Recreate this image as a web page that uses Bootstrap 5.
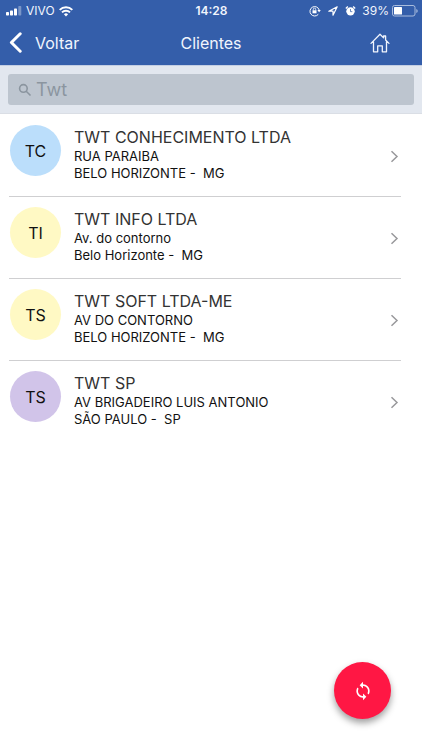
<!DOCTYPE html>
<html lang="pt-BR">
<head>
<meta charset="utf-8">
<meta name="viewport" content="width=device-width, initial-scale=1">
<title>Clientes</title>
<link href="https://cdn.jsdelivr.net/npm/bootstrap@5.3.0/dist/css/bootstrap.min.css" rel="stylesheet">
<style>
body { font-family: Inter, "Liberation Sans", sans-serif; background: #fff; color: #111; }
svg { display: block; flex: none; }
.app-head { background: #345eaa; color: #f1f5fd; }
.three-col { display: grid; grid-template-columns: 1fr auto 1fr; align-items: center; }
.status-line { height: 22px; padding: 0 4px 0 5px; font-size: 12px; line-height: 22px; }
.title-line { height: 43px; padding: 0 9px 2px; font-size: 16px; }
.title-line h1 { font-size: 16px; line-height: 24px; font-weight: 400; }
.title-line a { color: inherit; }
.back { gap: 13px; }
.home { margin-right: 23px; }
.status-icons { gap: 7px; margin-right: 6px; }
.battery { margin-left: 3px; }
.search-zone { background: #e2e7ef; border-top: 1px solid #c3cee3; border-bottom: 1px solid #dadee5; padding: 8px; }
.search-box { background: #bdc5cf; border-radius: 3px; height: 31px; padding: 0 9px 0 10px; color: #8b959f; }
.search-box input { font-size: 18px; line-height: 24px; color: #8b959f; }
.search-box input:focus { outline: none; }
.client-list { padding: 1px 21px 0 9px; }
.client { height: 82px; padding: 10px 2px 0 1px; color: inherit; }
li:not(:last-child) > .client { border-bottom: 1px solid #cfcfd1; }
.avatar { width: 51px; height: 51px; font-size: 16px; color: #111; flex: none; }
.blue { background: #bbdefb; }
.yellow { background: #fff9c4; }
.purple { background: #d1c4e9; }
.client-text { margin-left: 13px; font-size: 13px; line-height: 17px; padding-top: 2px; }
.client-text h2 { font-size: 16px; line-height: 21px; font-weight: 400; color: #333; }
.arrow { margin-top: 25px; }
.sync { width: 57px; height: 57px; right: 31px; bottom: 31px; background: #ff1744; box-shadow: 0 4px 7px rgba(0,0,0,.38); }
</style>
</head>
<body>
<header class="app-head">
  <div class="status-line three-col">
    <div class="d-flex align-items-center">
      <svg width="17" height="10" viewBox="0 0 17 10" fill="#fff"><rect x="1" y="6" width="3" height="3.500" rx=".7"/><rect x="5" y="4.500" width="3" height="5" rx=".7"/><rect x="9" y="2.500" width="3" height="7" rx=".7"/><rect x="13.300" y="0" width="3" height="9.500" rx=".7" opacity=".35"/></svg>
      <span class="ms-1">VIVO</span>
      <svg class="ms-1" width="14" height="11" viewBox="0 0 14 11" fill="none" stroke="#fff" stroke-width="2"><path d="M.7 3.900a9 9 0 0 1 12.600 0M3 6.400a5.700 5.700 0 0 1 8 0"/><path d="M7 10.500 4.900 8.300a3 3 0 0 1 4.200 0z" fill="#fff" stroke="none"/></svg>
    </div>
    <span class="fw-semibold">14:28</span>
    <div class="d-flex align-items-center justify-content-end">
      <div class="status-icons d-flex align-items-center">
        <svg width="12" height="12" viewBox="0 0 12 12" fill="none" stroke="#fff"><path d="M9.300 9.300A4.700 4.700 0 1 1 10.200 5"/><path d="M8.400 5h3.400l-1.700 2.300z" fill="#fff" stroke="none"/><rect x="3.500" y="5.300" width="4" height="3" fill="#fff" stroke="none"/><path d="M4.300 5.500V4.300a1.200 1.200 0 0 1 2.400 0v1.200" stroke-width=".8"/></svg>
        <svg width="10" height="10" viewBox="0 0 10 10" fill="none" stroke="#fff" stroke-width="1.200" stroke-linejoin="round"><path d="M.8 5.200 9.200.8 5 9.200V5.200z"/></svg>
        <svg width="11" height="12" viewBox="0 0 12 12" fill="none" stroke="#fff"><circle cx="6" cy="6.400" r="4.600" fill="#fff" stroke="none"/><path d="M.9 3.200 3.100 1.100M11.100 3.200 8.900 1.100" stroke-width="1.500"/><path d="M6 3.800v2.900h2" stroke="#345eaa" stroke-width=".8"/></svg>
      </div>
      <span>39%</span>
      <svg class="battery" width="26" height="12" viewBox="0 0 26 12"><rect x=".5" y=".5" width="22.500" height="10.500" rx="2" fill="none" stroke="#a9bcdd"/><rect x="2" y="2" width="8" height="7.500" rx=".6" fill="#fff"/><path d="M24.300 4v4q1.400-.6 1.400-2t-1.400-2" fill="#a9bcdd"/></svg>
    </div>
  </div>
  <nav class="title-line three-col" aria-label="Principal">
    <a href="#" class="back d-flex align-items-center text-decoration-none">
      <svg width="13" height="21" viewBox="0 0 13 21" fill="none" stroke="#fff" stroke-width="3" stroke-linecap="round" stroke-linejoin="round"><path d="M11.200 1.800 2.400 10.500l8.800 8.700"/></svg>
      <span>Voltar</span>
    </a>
    <h1 class="m-0">Clientes</h1>
    <a href="#" class="home ms-auto" aria-label="Início">
      <svg width="20" height="20" viewBox="0 0 20 20" fill="none" stroke="#f1f5fd" stroke-width="1.300" stroke-linejoin="round" stroke-linecap="round"><path d="M1 10.400 10 1.200l3.600 3.700V3h2v4l3.400 3.400M3.500 8.800v10h4.200v-6h4.600v6h4.200v-10"/></svg>
    </a>
  </nav>
</header>
<main>
  <div class="search-zone">
    <label class="search-box d-flex align-items-center">
      <svg width="14" height="14" viewBox="0 0 14 14" fill="none" stroke="#8b959f" stroke-width="1.600"><circle cx="5.400" cy="5.400" r="3.800"/><path d="m8.200 8.200 4.300 4.300"/></svg>
      <input class="border-0 bg-transparent p-0 ms-1 w-100" type="text" value="Twt" aria-label="Pesquisar clientes">
    </label>
  </div>
  <ul class="client-list list-unstyled m-0">
    <li><a href="#" class="client d-flex align-items-start text-decoration-none">
      <span class="avatar blue rounded-circle d-flex align-items-center justify-content-center">TC</span>
      <div class="client-text flex-grow-1"><h2 class="m-0">TWT CONHECIMENTO LTDA</h2><div>RUA PARAIBA</div><div>BELO HORIZONTE -&nbsp; MG</div></div>
      <svg class="arrow" width="9" height="13" viewBox="0 0 9 13" fill="none" stroke="#98989b" stroke-width="1.500"><path d="m1.500 1.200 5.500 5.300-5.500 5.300"/></svg>
    </a></li>
    <li><a href="#" class="client d-flex align-items-start text-decoration-none">
      <span class="avatar yellow rounded-circle d-flex align-items-center justify-content-center">TI</span>
      <div class="client-text flex-grow-1"><h2 class="m-0">TWT INFO LTDA</h2><div>Av. do contorno</div><div>Belo Horizonte -&nbsp; MG</div></div>
      <svg class="arrow" width="9" height="13" viewBox="0 0 9 13" fill="none" stroke="#98989b" stroke-width="1.500"><path d="m1.500 1.200 5.500 5.300-5.500 5.300"/></svg>
    </a></li>
    <li><a href="#" class="client d-flex align-items-start text-decoration-none">
      <span class="avatar yellow rounded-circle d-flex align-items-center justify-content-center">TS</span>
      <div class="client-text flex-grow-1"><h2 class="m-0">TWT SOFT LTDA-ME</h2><div>AV DO CONTORNO</div><div>BELO HORIZONTE -&nbsp; MG</div></div>
      <svg class="arrow" width="9" height="13" viewBox="0 0 9 13" fill="none" stroke="#98989b" stroke-width="1.500"><path d="m1.500 1.200 5.500 5.300-5.500 5.300"/></svg>
    </a></li>
    <li><a href="#" class="client d-flex align-items-start text-decoration-none">
      <span class="avatar purple rounded-circle d-flex align-items-center justify-content-center">TS</span>
      <div class="client-text flex-grow-1"><h2 class="m-0">TWT SP</h2><div>AV BRIGADEIRO LUIS ANTONIO</div><div>SÃO PAULO -&nbsp; SP</div></div>
      <svg class="arrow" width="9" height="13" viewBox="0 0 9 13" fill="none" stroke="#98989b" stroke-width="1.500"><path d="m1.500 1.200 5.500 5.300-5.500 5.300"/></svg>
    </a></li>
  </ul>
</main>
<button type="button" class="sync position-fixed border-0 rounded-circle p-0 d-flex align-items-center justify-content-center" aria-label="Sincronizar">
  <svg width="20" height="20" viewBox="0 0 24 24" fill="#fff"><path d="M12 4V1L8 5l4 4V6c3.310 0 6 2.690 6 6 0 1.010-.25 1.970-.7 2.800l1.460 1.460C19.540 15.030 20 13.570 20 12c0-4.420-3.580-8-8-8zm0 14c-3.310 0-6-2.690-6-6 0-1.010.25-1.970.7-2.800L5.240 7.740C4.460 8.970 4 10.430 4 12c0 4.420 3.580 8 8 8v3l4-4-4-4v3z"/></svg>
</button>
<script src="https://cdn.jsdelivr.net/npm/bootstrap@5.3.0/dist/js/bootstrap.bundle.min.js"></script>
</body>
</html>
